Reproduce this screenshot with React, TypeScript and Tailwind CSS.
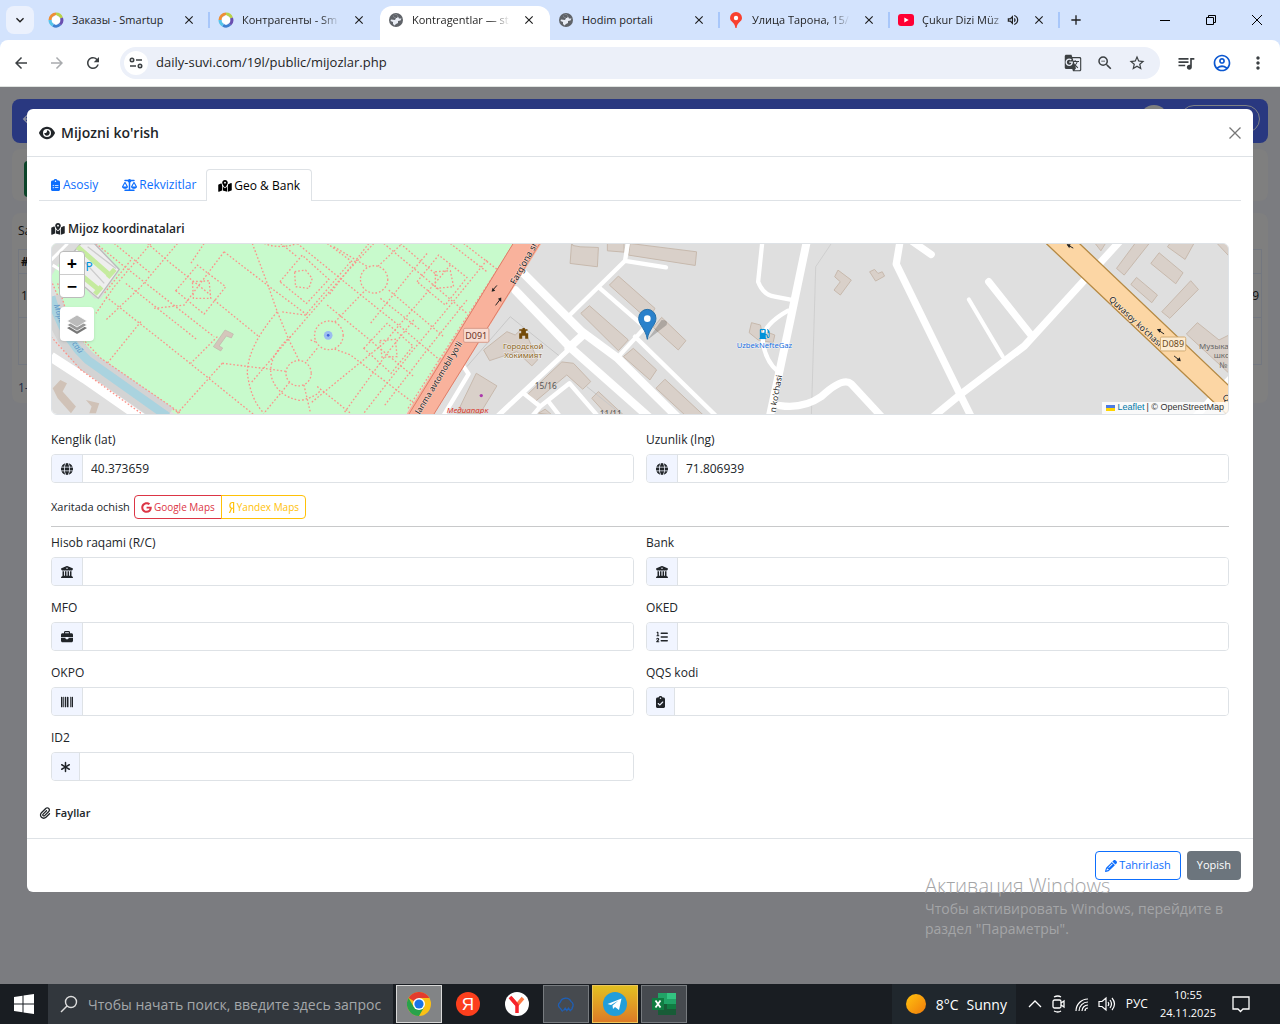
import type { ReactNode } from "react";
import type { IconType } from "react-icons";
import {
  FaAsterisk,
  FaBarcode,
  FaBriefcase,
  FaBuildingColumns,
  FaClipboardCheck,
  FaClipboardList,
  FaEye,
  FaGasPump,
  FaGlobe,
  FaGoogle,
  FaListOl,
  FaMapLocationDot,
  FaPaperclip,
  FaPencil,
  FaScaleBalanced,
  FaYandex,
} from "react-icons/fa6";
import {
  MdAdd,
  MdArrowBack,
  MdArrowForward,
  MdClose,
  MdGTranslate,
  MdKeyboardArrowDown,
  MdMoreVert,
  MdOutlineAccountCircle,
  MdOutlineVolumeUp,
  MdPublic,
  MdQueueMusic,
  MdRefresh,
  MdStarBorder,
  MdZoomOut,
} from "react-icons/md";

const SmartupIcon = () => (
  <svg viewBox="0 0 16 16" className="size-4 shrink-0">
    <g fill="none" strokeWidth="3">
      <path d="M8 2 A6 6 0 0 1 13.5 6" stroke="#b9d24a" />
      <path d="M13.5 6 A6 6 0 0 1 12 12.5" stroke="#6a4fb0" />
      <path d="M12 12.5 A6 6 0 0 1 5 13.2" stroke="#3f7fd0" />
      <path d="M5 13.2 A6 6 0 0 1 2 8" stroke="#56c4ea" />
      <path d="M2 8 A6 6 0 0 1 8 2" stroke="#ee8f35" />
    </g>
    <path d="M8 3 L12 6 V10 L8 13 L4 10 V6 Z" fill="#fff" />
  </svg>
);

const GlobeIcon = () => (
  <svg viewBox="0 0 16 16" className="size-4 shrink-0">
    <circle cx="8" cy="8" r="7" fill="#5f6368" />
    <path d="M8.500 2.500L6 3L5.500 5L8 6L7 8L3 7.500L2.500 9L5 10V12L6.500 13.500L8 12L10 11V9L12.500 8.500L13.500 6.500L11 6.500L10 4.500Z" fill="#e8ecf4" />
    <path d="M8.500 2.500L10 4.500L9 6H8L5.500 5L6 3Z" fill="#5f6368" />
  </svg>
);

const PinIcon = () => (
  <svg viewBox="0 0 16 16" className="size-4 shrink-0">
    <path d="M8 0 A6 6 0 0 1 14 6 C14 10 9 10 8.600 16 H7.400 C7 10 2 10 2 6 A6 6 0 0 1 8 0Z" fill="#f8402f" />
    <circle cx="8" cy="6" r="2.200" fill="#fff" />
  </svg>
);

const YoutubeIcon = () => (
  <svg viewBox="0 0 16 16" className="size-4 shrink-0">
    <rect y="2" width="16" height="12" rx="3" fill="#f03" />
    <path d="M6.300 5.500 L10.700 8 L6.300 10.500Z" fill="#fff" />
  </svg>
);

const tabs = [
  { title: "Заказы - Smartup", icon: <SmartupIcon />, line: true },
  { title: "Контрагенты - Sm", icon: <SmartupIcon />, fade: true },
  { title: "Kontragentlar — st", icon: <GlobeIcon />, active: true, fade: true },
  { title: "Hodim portali", icon: <GlobeIcon />, line: true },
  { title: "Улица Тарона, 15/", icon: <PinIcon />, line: true, fade: true },
  { title: "Çukur Dizi Müz", icon: <YoutubeIcon />, line: true, fade: true, audio: true },
];

const BrowserBar = () => (
  <header className="bg-[#d3e3fd] text-[#1f1f1f]">
    <div className="flex h-10 items-center">
      <button aria-label="Search tabs" className="mx-1.5 flex h-7 w-7 shrink-0 items-center justify-center rounded-lg bg-[#ebf1fd]">
        <MdKeyboardArrowDown className="size-4" />
      </button>
      {tabs.map((tab) => (
        <div
          key={tab.title}
          className={
            tab.active
              ? "mt-1.5 flex h-[34px] w-[170px] min-w-0 items-center rounded-t-xl bg-white pb-1.5 pl-2"
              : "flex h-10 w-[170px] min-w-0 items-center pl-2"
          }
        >
          {tab.icon}
          <span
            className={
              tab.fade
                ? "ml-2 flex-1 whitespace-nowrap mask-r-from-80% text-[11px] leading-4"
                : "ml-2 flex-1 whitespace-nowrap text-[11px] leading-4"
            }
          >
            {tab.title}
          </span>
          {tab.audio && <MdOutlineVolumeUp className="size-3.5 shrink-0" />}
          <button aria-label="Close tab" className="mx-3 shrink-0">
            <MdClose className="size-3.5" />
          </button>
          <span className={tab.line ? "h-4 w-0.5 shrink-0 bg-[#a8c7fa]" : "h-4 w-0.5 shrink-0"} />
        </div>
      ))}
      <button aria-label="New tab" className="ml-2">
        <MdAdd className="size-4" />
      </button>
      <div className="ml-auto flex items-center">
        <button aria-label="Minimize" className="flex w-[46px] justify-center">
          <svg viewBox="0 0 12 12" className="size-3">
            <path d="M1 6.500H11" stroke="#000" />
          </svg>
        </button>
        <button aria-label="Restore" className="flex w-[46px] justify-center">
          <svg viewBox="0 0 12 12" className="size-3" fill="none" stroke="#000">
            <path d="M1.500 3.500h7v7h-7zM3.500 3.500v-2h7v7h-2" />
          </svg>
        </button>
        <button aria-label="Close" className="flex w-[46px] justify-center">
          <svg viewBox="0 0 12 12" className="size-3" stroke="#000">
            <path d="M1 1l10 10M11 1L1 11" />
          </svg>
        </button>
      </div>
    </div>
    <div className="flex h-[47px] items-center rounded-t-lg border-b border-[#dfe3e0] bg-white pl-3 pr-3 text-[#3c4043]">
      <button aria-label="Back"><MdArrowBack className="size-[18px]" /></button>
      <button aria-label="Forward" className="ml-4.5 text-[#a9abae]"><MdArrowForward className="size-[18px]" /></button>
      <button aria-label="Reload" className="ml-4.5"><MdRefresh className="size-[18px]" /></button>
      <div className="ml-4.5 flex h-8 flex-1 items-center rounded-full bg-[#ecf0f9] pl-1 pr-3.5">
        <span className="flex size-6 items-center justify-center rounded-full bg-white">
          <svg viewBox="0 0 14 14" className="size-3.5" fill="none" stroke="#3c4043" strokeWidth="1.600">
            <circle cx="3" cy="4" r="1.700" />
            <path d="M7 4H13M1 10H7" />
            <circle cx="11" cy="10" r="1.700" />
          </svg>
        </span>
        <input
          aria-label="Address"
          className="ml-2 min-w-0 flex-1 bg-transparent text-[13px] text-[#1f1f1f] outline-none"
          defaultValue="daily-suvi.com/19l/public/mijozlar.php"
        />
        <span className="flex items-center gap-3.5">
          <MdGTranslate className="size-[18px]" />
          <MdZoomOut className="size-[18px]" />
          <MdStarBorder className="size-[18px]" />
        </span>
      </div>
      <div className="ml-4 flex items-center gap-4">
        <MdQueueMusic className="size-5" />
        <MdOutlineAccountCircle className="size-5 text-[#0b57d0]" />
        <MdMoreVert className="size-5" />
      </div>
    </div>
  </header>
);

const parkPaths = [
  // long diagonals running down to the right
  "M135 10L215 75L330 165L490 290M190 10L300 100M290 10L360 70L480 165",
  "M165 170L330 300L480 420L610 525M225 130L440 300M520 35L650 135L770 225",
  "M490 180L625 290M740 10L900 140L1050 260L1180 370M690 10L740 50",
  "M830 195L940 285L1090 410M850 20L960 85M905 65L830 10",
  "M1000 10L1120 110L1250 220M1050 10L1165 110M1015 150L1180 290M990 175L1110 270",
  "M780 300L900 345L1130 520M800 440L900 520M1240 10L1350 95M1200 10L1310 95",
  // and up to the right
  "M300 10L190 140L135 220M240 60L160 160M380 10L270 140L165 240",
  "M520 35L400 195L310 205M270 245L165 375M460 10L420 70M500 290L420 370",
  "M970 10L880 105L720 290L600 430M900 65L765 225L690 215",
  "M955 10L835 165M1050 15L960 100M940 155L830 270M1200 75L1000 310L780 490",
  "M515 370L380 520M1130 40L1080 100L960 250M1310 60L1180 220L1080 340L940 520",
  "M1090 240L1010 340L880 520M1250 180L1130 330L1000 500M800 325L690 460L640 520",
  // diamonds round the flower beds
  "M375 152L440 75L525 140L460 222ZM425 125L475 122L480 175L428 175Z",
  "M688 125L755 45L835 118L768 190ZM732 95L765 90L785 115L775 145L735 140Z",
  "M940 325L1010 250L1088 318L1022 400ZM988 302L1035 298L1040 350L995 352Z",
  "M1100 125L1165 45L1250 112L1185 195ZM1155 95L1200 92L1210 140L1155 145Z",
  // curved walks
  "M605 10L650 130L680 215L715 300L745 360M640 10Q690 28 740 10",
  "M680 215Q590 320 590 400Q600 480 640 520M720 290Q650 350 662 410Q680 470 750 482Q800 470 810 450",
  "M515 370L660 388L710 395M760 435L780 520",
];

// streets, drawn in map units: three units to a screen pixel
const MapCanvas = () => (
  <svg viewBox="0 0 3534 516" preserveAspectRatio="xMidYMid slice" className="block h-full w-full" fontFamily="'Noto Sans', sans-serif">
    <rect width="3534" height="516" fill="#dfdfdf" />
    <g transform="translate(-3 -9)">
      <path d="M0 0H1400L1062 530H385L110 355L40 240L0 110Z" fill="#c8facc" />
      <path d="M0 0H130L205 90L150 175H130L30 60L0 110Z" fill="#dcdcdc" />
      <g fill="none" stroke="#fb938a" strokeWidth="4" strokeDasharray="5 6">
        {parkPaths.map((d) => (
          <path key={d} d={d} />
        ))}
        <path d="M1385 20L1070 510M0 120L60 260L130 350L385 520M0 240L90 390L270 520" />
      </g>
      <g fill="#c8facc" stroke="#fb938a" strokeWidth="4" strokeDasharray="5 6">
        <circle cx="971" cy="118" r="41" />
        <circle cx="835" cy="286" r="43" />
        <circle cx="744" cy="400" r="38" />
      </g>
      <path d="M90 10H130L205 88L142 175L30 80Z" fill="#eee" stroke="#bbb" strokeWidth="4" />
      <path d="M80 20L180 108M170 112L192 88M60 80L145 150M132 162L152 140" stroke="#c5eb9e" strokeWidth="15" />
      <path d="M100 65L160 130M110 20L195 85" stroke="#ccc" strokeWidth="4" />
      <path d="M0 60L50 10M5 75L60 110" stroke="#fff" strokeWidth="9" />
      <path d="M0 170Q35 300 110 365L350 530" fill="none" stroke="#d3d3d3" strokeWidth="62" />
      <path d="M0 170Q35 290 110 360L350 530" fill="none" stroke="#aad3df" strokeWidth="26" />
      <path d="M0 350L100 415L280 540" fill="none" stroke="#fff" strokeWidth="30" />
      <path d="M0 290L90 390L270 520M20 130L60 260L150 355L390 520" fill="none" stroke="#fb938a" strokeWidth="4" strokeDasharray="5 6" />
      <path d="M5 445L28 420L48 430L35 455L75 500L60 520L20 475ZM105 480L145 490L135 520H115L122 500Z" fill="#d0c2b7" />
      <path d="M523 270L548 282L542 294L527 288L505 318L516 324L510 333L488 320Z" fill="#d4c6bb" stroke="#c0b3a9" strokeWidth="2" />
      <circle cx="833" cy="286" r="13" fill="#9bbcf0" />
      <circle cx="833" cy="286" r="4" fill="#3f62d8" />
      <text x="104" y="94" fontSize="36" fill="#0092da">P</text>
      <text transform="translate(8 195) rotate(72)" fontSize="24" fontStyle="italic" fill="#5b93c8">Марг</text>
      <text transform="translate(62 312) rotate(52)" fontSize="24" fontStyle="italic" fill="#5b93c8">сай</text>
    </g>
    <g transform="translate(1047 -9)">
      <g fill="#d9d0c9" stroke="#c7b9ad" strokeWidth="3">
        <path d="M515 0L518 16L540 20L595 22L592 80L510 70ZM622 0H672V36L622 32ZM690 10L890 35L886 76L686 45Z" />
        <path d="M655 108L765 205L745 240L628 135ZM785 232L858 302L835 330L760 262Z" />
        <path d="M568 197L685 300L655 332L542 220ZM700 325L770 390L750 420L670 350ZM795 418L915 530H860L768 445Z" />
        <path d="M250 330L320 275L345 285L370 262L412 360L395 378L350 335L268 362ZM228 400L290 438L240 520H170Z" />
        <path d="M485 366L520 370L572 425L548 448L500 405L405 485L384 462ZM595 455L670 525H620L575 475ZM415 520L435 508L455 525Z" />
        <path d="M1055 248L1082 255L1085 270L1125 285L1120 308L1075 300L1048 278Z" />
      </g>
      <g fill="none" stroke="#c8c8c8" strokeWidth="3">
        <path d="M200 380L330 230L480 350M560 440L660 520" />
      </g>
      <g fill="none" stroke="#fff" strokeLinecap="round" strokeLinejoin="round" strokeWidth="13">
        <path d="M370 100L545 275L650 352L830 530M345 150L510 322L745 530M545 288L505 325" strokeWidth="25" />
        <path d="M510 325L280 540" strokeWidth="15" />
        <path d="M512 222L675 62L685 0M675 62L798 82" />
        <path d="M600 145L735 262L655 350M705 290L945 525" />
        <path d="M370 460L420 500L508 430L590 525M445 485L480 530M420 500L395 530M190 380L205 402L128 530" />
        <path d="M1088 0L1075 125Q1090 165 1125 170L1180 180M1165 212Q1080 260 1090 310Q1098 365 1135 395" />
        <path d="M1222 0L1172 240L1108 540" strokeWidth="24" />
      </g>
      <path d="M345 0L20 520L15 540H90L430 0Z" fill="#f9b29c" />
      <path d="M345 0L15 540M425 0L90 540" stroke="#dd7d68" strokeWidth="3" />
      <g fontSize="27" fill="#222" stroke="#fff" strokeWidth="3" paintOrder="stroke" strokeOpacity="0.500">
        <text transform="translate(345 135) rotate(-61)">Farg'ona sho</text>
        <text transform="translate(58 525) rotate(-59)" fontSize="25">lanma avtomobil yo'li</text>
        <text transform="translate(1127 519) rotate(-80)" fontSize="25">n ko'chasi</text>
      </g>
      <path d="M290 136L276 152M298 180L286 196" stroke="#222" strokeWidth="3" />
      <path d="M277 143L285 152L274 155ZM293 176L303 186L303 172Z" fill="#222" />
      <rect x="190" y="265" width="76" height="42" rx="4" fill="#f9dcd2" stroke="#d79b8a" strokeWidth="3" />
      <text x="228" y="296" fontSize="27" textAnchor="middle" fill="#6b3326">D091</text>
      <path d="M357 296V280H363V272H357V268H367V264H374V268H382V272H377V280H384V296H375V287H366V296Z" fill="#734a08" />
      <g fontSize="24" textAnchor="middle" fill="#8a6420" stroke="#fff" strokeWidth="3" strokeOpacity="0.600" paintOrder="stroke">
        <text x="369" y="326">Городской</text>
        <text x="369" y="353">Хокимият</text>
      </g>
      <text x="437" y="446" fontSize="25" textAnchor="middle" fill="#555">15/16</text>
      <text x="632" y="530" fontSize="25" textAnchor="middle" fill="#555">11/11</text>
      <text x="202" y="519" fontSize="24" textAnchor="middle" fontStyle="italic" fill="#d9362c">Медиапарк</text>
      <circle cx="243" cy="467" r="5" fill="#ac39ac" />
      <FaGasPump x="1078" y="266" size="32" color="#0092da" />
      <text x="1094" y="324" fontSize="23" textAnchor="middle" fill="#1a6fe0" stroke="#fff" strokeWidth="3" strokeOpacity="0.600" paintOrder="stroke">UzbekNefteGaz</text>
      <path d="M742 300L800 255Q806 240 785 240Z" fill="#000" opacity="0.200" />
      <path d="M742 298C738 268 716 255 716 235A26 27 0 0 1 768 235C768 255 746 268 742 298Z" fill="#2a81cb" stroke="#236ea9" strokeWidth="3" />
      <circle cx="742" cy="236" r="10" fill="#fff" />
    </g>
    <g transform="translate(2187 -9)">
      <path d="M155 10L108 80L95 530" fill="none" stroke="#cfcfcf" strokeWidth="3" />
      <g fill="#d9d0c9" stroke="#c7b9ad" strokeWidth="3">
        <path d="M175 90L215 120L182 165L163 150L182 125L165 110ZM270 95L285 88L295 100L308 95L315 108L288 123Z" />
        <path d="M1075 0H1118L1035 105L1012 85ZM1140 38L1212 98L1190 131L1115 70ZM1180 0H1250L1218 58L1165 20Z" />
        <path d="M1072 112L1135 165L1118 188L1055 133ZM1235 122L1258 148L1172 235L1148 215ZM1255 248L1320 300L1350 285V400L1222 282ZM940 0H985L965 32ZM1305 0H1350V48Z" />
      </g>
      <g fill="none" stroke="#fff" strokeLinecap="round" strokeLinejoin="round" strokeWidth="22">
        <path d="M0 497Q70 508 125 470Q190 410 215 432L310 535M362 0L350 72L540 460L580 540M400 5L455 43" />
        <path d="M450 540L545 462L735 318L1025 0M628 125L755 285M1250 530L1360 410" />
        <path d="M568 178L670 350" strokeWidth="12" />
      </g>
      <path d="M790 0L1300 485L1350 530V438L890 0Z" fill="#fcd6a4" />
      <path d="M790 0L1350 530M890 0L1350 438" stroke="#b58a45" strokeWidth="4" />
      <path d="M864 14L882 24M1137 270L1155 282M1185 348L1200 360" stroke="#222" strokeWidth="3" />
      <path d="M862 12L874 12L870 24ZM1133 268L1146 266L1142 278ZM1205 364L1192 362L1202 352Z" fill="#222" />
      <g fontSize="26" fill="#222" stroke="#fff" strokeWidth="3" strokeOpacity="0.500" paintOrder="stroke">
        <text transform="translate(987 180) rotate(43)">Quvasoy ko'chasi</text>
        <text transform="translate(1328 474) rotate(42)">Q</text>
      </g>
      <rect x="1144" y="291" width="76" height="42" rx="4" fill="#fdebd0" stroke="#d3ac74" strokeWidth="3" />
      <text x="1182" y="322" fontSize="27" textAnchor="middle" fill="#6b4a1c">D089</text>
      <g fontSize="24" fill="#666">
        <text x="1260" y="326">Музыка</text>
        <text x="1304" y="355">шко</text>
        <text x="1320" y="384">№</text>
      </g>
    </g>
  </svg>
);

const ClientMap = () => (
  <div className="relative h-[172px] overflow-hidden rounded-md border border-[#dee2e6]">
    <MapCanvas />
    <div className="absolute left-[7px] top-[7px] flex w-[26px] flex-col overflow-hidden rounded-sm border border-[#bbb] bg-white text-center text-[18px] font-bold leading-[22px] text-black">
      <button aria-label="Zoom in" className="h-[23px] border-b border-[#ccc]">+</button>
      <button aria-label="Zoom out" className="h-[22px]">−</button>
    </div>
    <button aria-label="Layers" className="absolute left-2 top-[63px] flex size-[34px] items-center justify-center rounded bg-white shadow">
      <svg viewBox="0 0 26 26" className="size-[26px]">
        <path d="M13 12L23 17L13 23L3 17Z" fill="#777" />
        <path d="M13 8L23 14L13 20L3 14Z" fill="#999" stroke="#fff" strokeWidth="0.800" />
        <path d="M13 4L23 10L13 16L3 10Z" fill="#bbb" stroke="#fff" strokeWidth="0.800" />
      </svg>
    </button>
    <div className="absolute bottom-0 right-0 flex h-3 items-center gap-0.5 bg-white/80 px-1 font-['Liberation_Sans',sans-serif] text-[9px] text-[#333]">
      <svg viewBox="0 0 9 6" className="h-1.5 w-[9px]">
        <path d="M0 0H9V3H0Z" fill="#4c7be1" />
        <path d="M0 3H9V6H0Z" fill="#ffd500" />
      </svg>
      <a href="#leaflet" className="text-[#0078a8]">Leaflet</a>
      <span>| © OpenStreetMap</span>
    </div>
  </div>
);

type FieldProps = {
  id: string;
  label: string;
  icon: IconType;
  value?: string;
  narrow?: boolean;
};

const Field = ({ id, label, icon: Icon, value, narrow }: FieldProps) => (
  <div>
    <label htmlFor={id} className="mb-1 block leading-5">
      {label}
    </label>
    <div className="flex h-[29px] overflow-hidden rounded border border-[#dee2e6]">
      <span className="flex items-center border-r border-[#dee2e6] bg-[#f1f5ff] px-[9px]">
        <Icon className={narrow ? "h-3 w-[9px]" : "size-3"} />
      </span>
      <input id={id} defaultValue={value} className="min-w-0 flex-1 bg-white px-2 pt-px outline-none" />
    </div>
  </div>
);

const bankFields: FieldProps[] = [
  { id: "rc", label: "Hisob raqami (R/C)", icon: FaBuildingColumns },
  { id: "bank", label: "Bank", icon: FaBuildingColumns },
  { id: "mfo", label: "MFO", icon: FaBriefcase },
  { id: "oked", label: "OKED", icon: FaListOl },
  { id: "okpo", label: "OKPO", icon: FaBarcode },
  { id: "qqs", label: "QQS kodi", icon: FaClipboardCheck, narrow: true },
  { id: "id2", label: "ID2", icon: FaAsterisk, narrow: true },
];

const ClientModal = () => (
  <section role="dialog" aria-label="Mijozni ko'rish" className="relative mx-[27px] mt-[22px] rounded-md bg-white text-[12px] text-[#212529]">
    <div className="flex h-12 items-center border-b border-[#dee2e6] px-3">
      <FaEye className="size-4" />
      <h5 className="ml-1.5 text-[14px] font-semibold">Mijozni ko'rish</h5>
      <button aria-label="Close" className="ml-auto text-[#777]">
        <svg viewBox="0 0 12 12" className="size-3" stroke="currentColor" strokeWidth="1.300">
          <path d="M0.500 0.500l11 11M11.500 0.500l-11 11" />
        </svg>
      </button>
    </div>

    <div className="px-3 pt-3">
      <nav className="flex h-8 border-b border-[#dee2e6]">
        <button className="flex items-center gap-[3px] px-3 pt-px text-[#0d6efd]">
          <FaClipboardList className="h-3 w-[9px]" /> Asosiy
        </button>
        <button className="flex items-center gap-0.5 pl-3 pr-2.5 pt-px text-[#0d6efd]">
          <FaScaleBalanced className="h-3 w-[15px]" /> Rekvizitlar
        </button>
        <button className="-mb-px flex items-center gap-0.5 rounded-t border border-b-0 border-[#dee2e6] bg-white px-[11px] text-black">
          <FaMapLocationDot className="h-3 w-3.5" /> Geo & Bank
        </button>
      </nav>

      <div className="px-3 pt-[18px]">
        <h6 className="mb-1 flex items-center gap-[3px] font-semibold leading-5">
          <FaMapLocationDot className="h-3 w-3.5" /> Mijoz koordinatalari
        </h6>
        <ClientMap />
        <div className="mt-[15px] grid grid-cols-2 gap-3">
          <Field id="lat" label="Kenglik (lat)" icon={FaGlobe} value="40.373659" />
          <Field id="lng" label="Uzunlik (lng)" icon={FaGlobe} value="71.806939" />
        </div>
        <div className="mt-3 flex h-6 items-center gap-1 text-[11px]">
          <span>Xaritada ochish</span>
          <div className="flex h-6 text-[10px]">
            <a href="#google" className="flex items-center gap-0.5 rounded-l-sm border border-[#dc3545] px-1.5 text-[#dc3545]">
              <FaGoogle className="size-[11px]" /> Google Maps
            </a>
            <a href="#yandex" className="-ml-px flex items-center gap-0.5 rounded-r-sm border border-[#ffc107] px-1.5 text-[#ffc107]">
              <FaYandex className="h-[11px] w-[7px]" /> Yandex Maps
            </a>
          </div>
        </div>
        <hr className="mb-1.5 mt-[7px] border-[#c8c9ca]" />
        <div className="grid grid-cols-2 gap-3">
          {bankFields.map((field) => (
            <Field key={field.id} {...field} />
          ))}
        </div>
      </div>

      <h6 className="mt-[22px] flex items-center gap-1 pb-[15px] text-[11px] font-semibold leading-5">
        <FaPaperclip className="size-3" /> Fayllar
      </h6>
    </div>

    <div className="flex justify-end gap-1.5 border-t border-[#dee2e6] p-3 text-[11px]">
      <button className="flex h-[29px] items-center gap-0.5 rounded border border-[#0d6efd] px-[9px] text-[#0d6efd]">
        <FaPencil className="size-3" /> Tahrirlash
      </button>
      <button className="h-[29px] rounded bg-[#6c757d] px-2.5 font-medium text-white">Yopish</button>
    </div>
  </section>
);

// list page under the dimmed backdrop
const PageBehind = () => (
  <div aria-hidden="true" className="absolute inset-0 overflow-hidden bg-[#7b7c80] px-3 pt-3 text-[12px] text-[#111]">
    <div className="flex h-11 items-start justify-between rounded-lg bg-[#293880] px-2 pt-1.5">
      <MdArrowBack className="mt-1.5 size-4 text-[#8b8f9f]" />
      <div className="flex items-center gap-3">
        <span className="size-7 rounded-full bg-[#80817f]" />
        <span className="h-7 w-20 rounded-full border border-[#7f8285]" />
      </div>
    </div>
    <div className="mt-1.5 h-[52px] rounded-lg bg-[#7f7f7f] p-3">
      <div className="h-9 w-24 rounded bg-[#0c4429]" />
    </div>
    <div className="mt-3 h-[190px] rounded-lg bg-[#7f7f7f] px-1.5 pt-2">
      <div className="leading-5">Saqlash</div>
      <div className="mt-2 h-[116px] border border-[#73777f]">
        <div className="flex h-6 items-center border-b border-[#73777f] px-0.5 font-bold">#</div>
        <div className="flex h-11 items-center justify-between border-b border-[#73777f] px-0.5">
          <span>1</span>
          <span>99</span>
        </div>
      </div>
      <div className="mt-3.5 text-[#1c2c4a]">1-1</div>
    </div>
  </div>
);

const ChromeLogo = () => (
  <svg viewBox="0 0 24 24" className="size-6">
    <circle cx="12" cy="12" r="12" fill="#fbc116" />
    <path d="M12 12L1.600 6A12 12 0 0 1 22.400 6H12Z" fill="#e33b2e" />
    <path d="M1.600 6A12 12 0 0 0 12 24L17.200 15H6.800Z" fill="#29a24b" />
    <circle cx="12" cy="12" r="6" fill="#fff" />
    <circle cx="12" cy="12" r="4.600" fill="#1a73e8" />
  </svg>
);

const YandexLogo = () => (
  <svg viewBox="0 0 24 24" className="size-6">
    <circle cx="12" cy="12" r="12" fill="#fc3f1d" />
    <text x="12" y="18" fontSize="17" textAnchor="middle" fill="#fff" fontFamily="'Liberation Sans', sans-serif">Я</text>
  </svg>
);

const YBrowserLogo = () => (
  <svg viewBox="0 0 24 24" className="size-6">
    <circle cx="12" cy="12" r="12" fill="#fff" />
    <path d="M6 6L12 13L18 6" fill="none" stroke="#ff7a45" strokeWidth="3.500" />
    <path d="M5 5L12 13V21" fill="none" stroke="#f6232d" strokeWidth="3.500" />
  </svg>
);

const CloudLogo = () => (
  <svg viewBox="0 0 24 24" className="size-5" fill="none" stroke="#1f5fb4" strokeWidth="1.600">
    <path d="M5 17A4 4 0 0 1 5 10A7 7 0 0 1 18 9A5 5 0 0 1 19 17M5 17L8 21M9 20L11 17L13 20L15 17L17 20L20 17" />
  </svg>
);

const TelegramLogo = () => (
  <svg viewBox="0 0 24 24" className="size-6">
    <circle cx="12" cy="12" r="12" fill="#229ed9" />
    <path d="M4.500 12L18.500 6.500L16 18L12 15L10 17L9.500 13.500L15.500 8.500L8 13Z" fill="#fff" />
  </svg>
);

const ExcelLogo = () => (
  <svg viewBox="0 0 24 24" className="size-6">
    <path d="M6 1H24V23H6Z" fill="#21a366" />
    <path d="M6 12H24V23H6Z" fill="#185c37" />
    <path d="M15 1H24V7H15Z" fill="#33c481" />
    <path d="M15 12H24V17H15Z" fill="#107c41" />
    <path d="M0 6H12V18H0Z" fill="#107c41" />
    <path d="M3.500 8.500L8.500 15.500M8.500 8.500L3.500 15.500" stroke="#fff" strokeWidth="1.800" />
  </svg>
);

type TaskProps = { label: string; look: string; children: ReactNode };

const Task = ({ label, look, children }: TaskProps) => (
  <button aria-label={label} className={`flex h-[38px] w-[46px] items-center justify-center border ${look}`}>
    {children}
  </button>
);

const Taskbar = () => (
  <footer className="flex h-10 items-center bg-[#191d22] text-white">
    <button aria-label="Start" className="flex w-12 shrink-0 justify-center">
      <svg viewBox="0 0 20 20" className="size-5" fill="#fff">
        <path d="M0 3L8.500 1.800V9.500H0ZM9.500 1.600L20 0V9.500H9.500ZM0 10.500H8.500V18.200L0 17ZM9.500 10.500H20V20L9.500 18.400Z" />
      </svg>
    </button>
    <div className="flex h-10 w-[345px] items-center bg-[#32373d] pl-3">
      <svg viewBox="0 0 18 18" className="size-[18px] shrink-0" fill="none" stroke="#ddd" strokeWidth="1.400">
        <circle cx="11" cy="7" r="5.500" />
        <path d="M7 11L1 17" />
      </svg>
      <input
        aria-label="Поиск"
        placeholder="Чтобы начать поиск, введите здесь запрос"
        className="ml-2.5 min-w-0 flex-1 bg-transparent text-[14px] outline-none placeholder:text-[#a4a7aa]"
      />
    </div>
    <div className="ml-[3px] flex gap-[3px]">
      <Task label="Chrome" look="border-[#d8d8d8] bg-[#828486]"><ChromeLogo /></Task>
      <Task label="Yandex" look="border-transparent"><YandexLogo /></Task>
      <Task label="Yandex Browser" look="border-transparent"><YBrowserLogo /></Task>
      <Task label="Cloud" look="border-[#777b7f] bg-[#464a4f]"><CloudLogo /></Task>
      <Task label="Telegram" look="border-[#eec65a] bg-linear-to-b from-[#e2c021] to-[#dc7a26]"><TelegramLogo /></Task>
      <Task label="Excel" look="border-[#777b7f] bg-[#464a4f]"><ExcelLogo /></Task>
    </div>
    <div className="ml-auto flex h-10 w-[124px] items-center bg-[#20272d] pl-3.5 text-[14px]">
      <span className="size-5 rounded-full bg-linear-to-br from-[#ffc30f] to-[#ef7a0b]" />
      <span className="ml-2.5">8°C</span>
      <span className="ml-2">Sunny</span>
    </div>
    <div className="ml-3 flex items-center gap-2">
      <svg viewBox="0 0 14 14" className="size-3.5" fill="none" stroke="#fff" strokeWidth="1.300">
        <path d="M1 10L7 4L13 10" />
      </svg>
      <svg viewBox="0 0 16 18" className="h-[18px] w-4" fill="none" stroke="#fff" strokeWidth="1.300">
        <rect x="3" y="5" width="8" height="8" rx="1.500" />
        <path d="M11 8L14 6V12L11 10M4 2Q8 0 11 2M4 16Q8 18 11 16" />
      </svg>
      <svg viewBox="0 0 16 16" className="size-4" fill="none" stroke="#fff" strokeWidth="1.200">
        <path d="M2 15A12 12 0 0 1 14 3M5 15A9 9 0 0 1 14 6M8 15A6 6 0 0 1 14 9M11 15A3 3 0 0 1 14 12" />
      </svg>
      <svg viewBox="0 0 18 16" className="h-4 w-[18px]" fill="none" stroke="#fff" strokeWidth="1.200">
        <path d="M1 5.500H4L8 2V14L4 10.500H1ZM10 6Q11.500 8 10 10M12 4Q15 8 12 12M14 2Q19 8 14 14" />
      </svg>
    </div>
    <span className="ml-2.5 text-[12px]">РУС</span>
    <div className="ml-3 text-center text-[11px] leading-[18px]">
      <div>10:55</div>
      <div>24.11.2025</div>
    </div>
    <button aria-label="Notifications" className="ml-4 mr-[30px]">
      <svg viewBox="0 0 18 18" className="size-[18px]" fill="none" stroke="#fff" strokeWidth="1.300">
        <path d="M1 2H17V14H11L8.500 16.500L6 14H1Z" />
      </svg>
    </button>
  </footer>
);

const App = () => {
  return (
    <div className="flex min-h-screen flex-col font-['Open_Sans','Noto_Sans',sans-serif]">
      <BrowserBar />
      <main className="relative flex-1 pb-4">
        <PageBehind />
        <ClientModal />
        <div className="pointer-events-none absolute bottom-[45px] right-[50px] w-[305px] text-[#a4a5a7]">
          <div className="text-[20px] font-light leading-[26px]">Активация Windows</div>
          <div className="text-[14px] leading-5">Чтобы активировать Windows, перейдите в раздел "Параметры".</div>
        </div>
      </main>
      <Taskbar />
    </div>
  );
};

export default App;
